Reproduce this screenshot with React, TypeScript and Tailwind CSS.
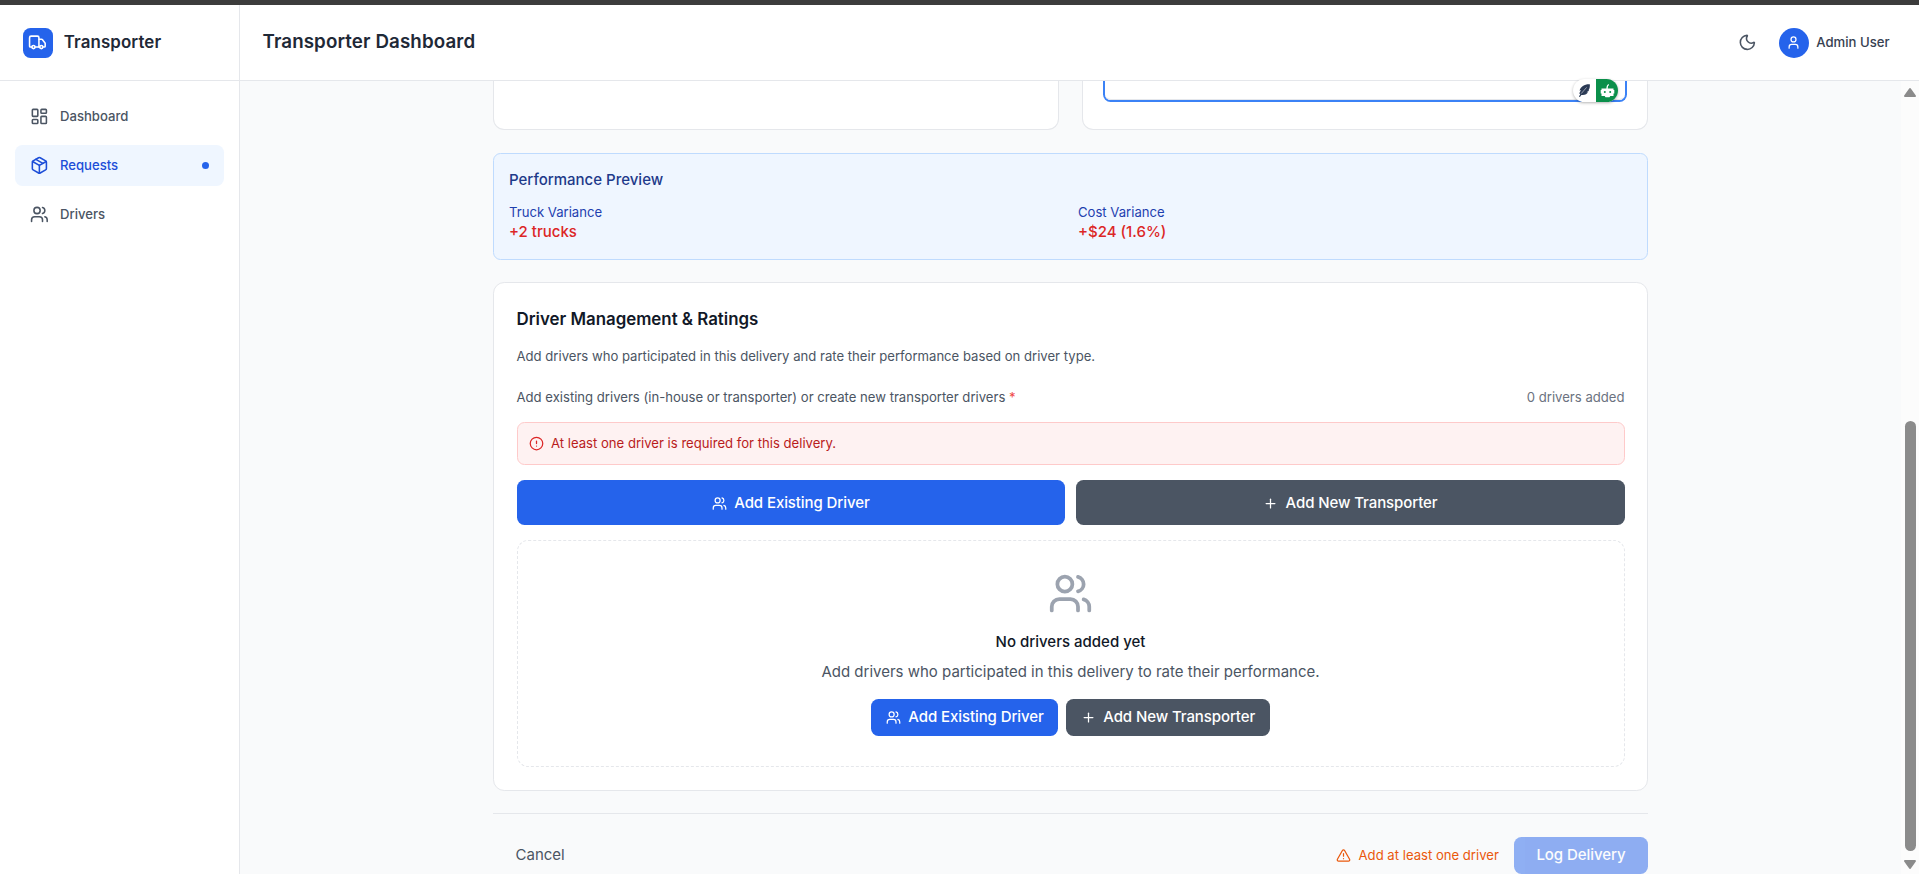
import React from "react";
import {
  CircleAlert,
  LayoutDashboard,
  Moon,
  Package,
  Plus,
  TriangleAlert,
  Truck,
  User,
  Users,
  type LucideIcon,
} from "lucide-react";

function NavItem({ icon: Icon, label, active }: { icon: LucideIcon; label: string; active?: boolean }) {
  return (
    <a
      className={
        active
          ? "flex items-center gap-3 rounded-lg bg-[#eff6ff] px-4 py-3 text-sm font-medium text-[#1d4ed8]"
          : "flex items-center gap-3 rounded-lg px-4 py-3 text-sm font-medium text-[#4b5563]"
      }
    >
      <Icon className="size-5" />
      <span className="flex-1">{label}</span>
      {active && <span className="size-2 rounded-full bg-[#2563eb]" />}
    </a>
  );
}

function DriverButtons({ size }: { size: "large" | "small" }) {
  const shape =
    size === "large"
      ? "flex h-[45px] flex-1 items-center justify-center gap-2 rounded-lg pt-px font-medium tracking-[-0.09px] text-white"
      : "flex h-[37px] items-center justify-center gap-2 rounded-lg px-[14.5px] font-medium tracking-[-0.09px] text-white";
  return (
    <div className={size === "large" ? "flex gap-3" : "flex justify-center gap-[8px]"}>
      <button className={`${shape} bg-[#2563eb]`}>
        <Users className="size-4" />
        Add Existing Driver
      </button>
      <button className={`${shape} bg-[#4b5563]`}>
        <Plus className="size-4" />
        Add New Transporter
      </button>
    </div>
  );
}

function Variance({ label, value }: { label: string; value: string }) {
  return (
    <div>
      <p className="text-sm leading-[18.75px] text-[#1e40af]">{label}</p>
      <p className="leading-[22px] font-medium text-[#dc2626]">{value}</p>
    </div>
  );
}

function AssistantBadge() {
  return (
    <div className="absolute right-[29px] bottom-[27px] flex h-[23px] w-[45px] overflow-hidden rounded-full bg-white shadow-[0_1px_3px_rgba(0,0,0,0.3)]">
      <svg viewBox="0 0 23 23" className="h-[23px] w-[23px]">
        <path
          d="M16.8 5.200c-4.600-.4-9.300 2.100-10.300 6.600l1.500-.8-1.700 3.200.9 1.200-1.300 2.100 1 .5 1.500-2c3.600.4 5.600-.9 6.600-2.700l-1.500-.1 2.600-1.400-.6-.5c1.200-1.600 1.600-4.100 1.300-6.100Z"
          fill="#2b3a55"
        />
        <path d="M8.200 14.600 13.600 8.400" stroke="#fff" strokeWidth="0.500" />
      </svg>
      <svg viewBox="0 0 22 23" className="h-[23px] w-[22px] bg-[#0a8f4a]">
        <path d="M11 10c0-2.700.3-3.900 1.800-4.500" stroke="#fff" strokeWidth="1.300" fill="none" />
        <path d="M5.500 9.500h12v1.500h.8v3.500h-.8V17h-3.200l-.8 1.200H9.500L8.700 17H5.500v-2.500h-.8V11h.8Z" fill="#fff" />
        <circle cx="8.800" cy="13" r="1" fill="#0a8f4a" />
        <circle cx="14.200" cy="13" r="1" fill="#0a8f4a" />
      </svg>
    </div>
  );
}

export default function App() {
  return (
    <div className="flex h-[874px] w-[1919px] flex-col overflow-hidden bg-[#f9fafb] font-['Inter',sans-serif] text-[15px] leading-[22.5px] text-[#111827] [--radius-lg:7.5px] [--radius-xl:11.25px] [--spacing:3.75px] [--text-lg:16.875px] [--text-sm:13.125px] [--text-xl:18.75px]">
      <div className="h-[5px] shrink-0 bg-[#3c3c3c]" />
      <div className="flex min-h-0 flex-1">
        <aside className="flex w-[240px] shrink-0 flex-col border-r border-[#e5e7eb] bg-white">
          <div className="flex h-[76px] items-center gap-3 border-b border-[#e5e7eb] px-6">
            <span className="flex size-8 items-center justify-center rounded-lg bg-[#2563eb] text-white">
              <Truck className="size-5" />
            </span>
            <span className="text-lg leading-none font-semibold tracking-[0.12px] text-[#1f2937]">Transporter</span>
          </div>
          <nav className="flex flex-col gap-2 p-4">
            <NavItem icon={LayoutDashboard} label="Dashboard" />
            <NavItem icon={Package} label="Requests" active />
            <NavItem icon={Users} label="Drivers" />
          </nav>
        </aside>

        <div className="flex min-w-0 flex-1 flex-col">
          <header className="flex h-[76px] shrink-0 items-center justify-between border-b border-[#e5e7eb] bg-white px-6">
            <h1 className="pb-px text-xl font-semibold tracking-[0.1px] text-[#1f2937]">Transporter Dashboard</h1>
            <div className="flex items-center gap-4 pr-[7px]">
              <button className="p-2 text-[#4b5563]">
                <Moon className="size-5" />
              </button>
              <div className="flex items-center gap-2">
                <span className="flex size-8 items-center justify-center rounded-full bg-[#2563eb] text-white">
                  <User className="size-4" />
                </span>
                <span className="text-sm font-medium text-[#374151]">Admin User</span>
              </div>
            </div>
          </header>

          <div className="flex min-h-0 flex-1">
            <main className="flex flex-1 justify-center">
              <div className="flex w-[1155px] flex-col">
                <div className="grid h-[49px] shrink-0 grid-cols-2 gap-6">
                  <section className="rounded-b-xl border border-t-0 border-[#e5e7eb] bg-white" />
                  <section className="relative rounded-b-xl border border-t-0 border-[#e5e7eb] bg-white px-[20px]">
                    <div className="h-[21px] rounded-b-lg border-2 border-t-0 border-[#3b82f6] bg-white">
                      <div className="h-full rounded-b-[6px] border-b border-[#e5e7eb]" />
                    </div>
                    <AssistantBadge />
                  </section>
                </div>

                <section className="mt-[23px] h-[107px] shrink-0 rounded-lg border border-[#bfdbfe] bg-[#eff6ff] px-[15px] pt-[15px]">
                  <h3 className="font-medium text-[#1e3a8a]">Performance Preview</h3>
                  <div className="mt-[11px] grid grid-cols-2 gap-4">
                    <Variance label="Truck Variance" value="+2 trucks" />
                    <Variance label="Cost Variance" value="+$24 (1.6%)" />
                  </div>
                </section>

                <section className="mt-[22px] h-[509px] shrink-0 rounded-xl border border-[#e5e7eb] bg-white px-[22.5px] pt-[23px]">
                  <h2 className="text-lg leading-[27px] font-semibold">Driver Management &amp; Ratings</h2>
                  <p className="mt-[14px] text-sm leading-[19px] text-[#4b5563]">
                    Add drivers who participated in this delivery and rate their performance based on driver type.
                  </p>
                  <div className="mt-[22px] flex justify-between text-sm leading-[19px]">
                    <span className="text-[#4b5563]">
                      Add existing drivers (in-house or transporter) or create new transporter drivers{" "}
                      <span className="text-[#ef4444]">*</span>
                    </span>
                    <span className="text-[#6b7280]">0 drivers added</span>
                  </div>
                  <div className="mt-[15px] flex h-[43px] items-center gap-2 rounded-lg border border-[#fecaca] bg-[#fef2f2] px-[11px] text-sm text-[#b91c1c]">
                    <CircleAlert className="size-4 text-[#dc2626]" />
                    At least one driver is required for this delivery.
                  </div>
                  <div className="mt-[15px]">
                    <DriverButtons size="large" />
                  </div>
                  <div className="mt-[15px] flex h-[227px] flex-col items-center rounded-xl border border-dashed border-[#e5e7eb] pt-[30px]">
                    <Users className="size-12 text-[#9ca3af]" />
                    <p className="mt-[15px] font-medium">No drivers added yet</p>
                    <p className="mt-[7px] text-[#4b5563]">
                      Add drivers who participated in this delivery to rate their performance.
                    </p>
                    <div className="mt-[16px]">
                      <DriverButtons size="small" />
                    </div>
                  </div>
                </section>

                <footer className="mt-[22px] flex shrink-0 items-center justify-between border-t border-[#e5e7eb] pt-[23px]">
                  <button className="px-6 text-[#4b5563]">Cancel</button>
                  <div className="flex items-center gap-4">
                    <span className="flex items-center gap-2 text-sm text-[#ea580c]">
                      <TriangleAlert className="size-4" />
                      Add at least one driver
                    </span>
                    <button className="h-[37px] rounded-lg bg-[#2563eb] px-6 font-medium tracking-[-0.06px] text-white opacity-50">
                      Log Delivery
                    </button>
                  </div>
                </footer>
              </div>
            </main>
            <div className="flex w-[18px] shrink-0 flex-col items-center bg-[#fcfcfc]">
              <svg viewBox="0 0 14 11" className="mt-[6px] h-[11px] w-[14px] shrink-0">
                <path d="M7 2 12 9H2Z" fill="#8b8b8b" stroke="#8b8b8b" strokeWidth="2" strokeLinejoin="round" />
              </svg>
              <div className="mt-[323px] ml-px h-[430px] w-[11px] shrink-0 rounded-full bg-[#8b8b8b]" />
              <svg viewBox="0 0 14 11" className="mt-[8px] h-[11px] w-[14px] shrink-0">
                <path d="M7 9 12 2H2Z" fill="#8b8b8b" stroke="#8b8b8b" strokeWidth="2" strokeLinejoin="round" />
              </svg>
            </div>
          </div>
        </div>
      </div>
    </div>
  );
}
